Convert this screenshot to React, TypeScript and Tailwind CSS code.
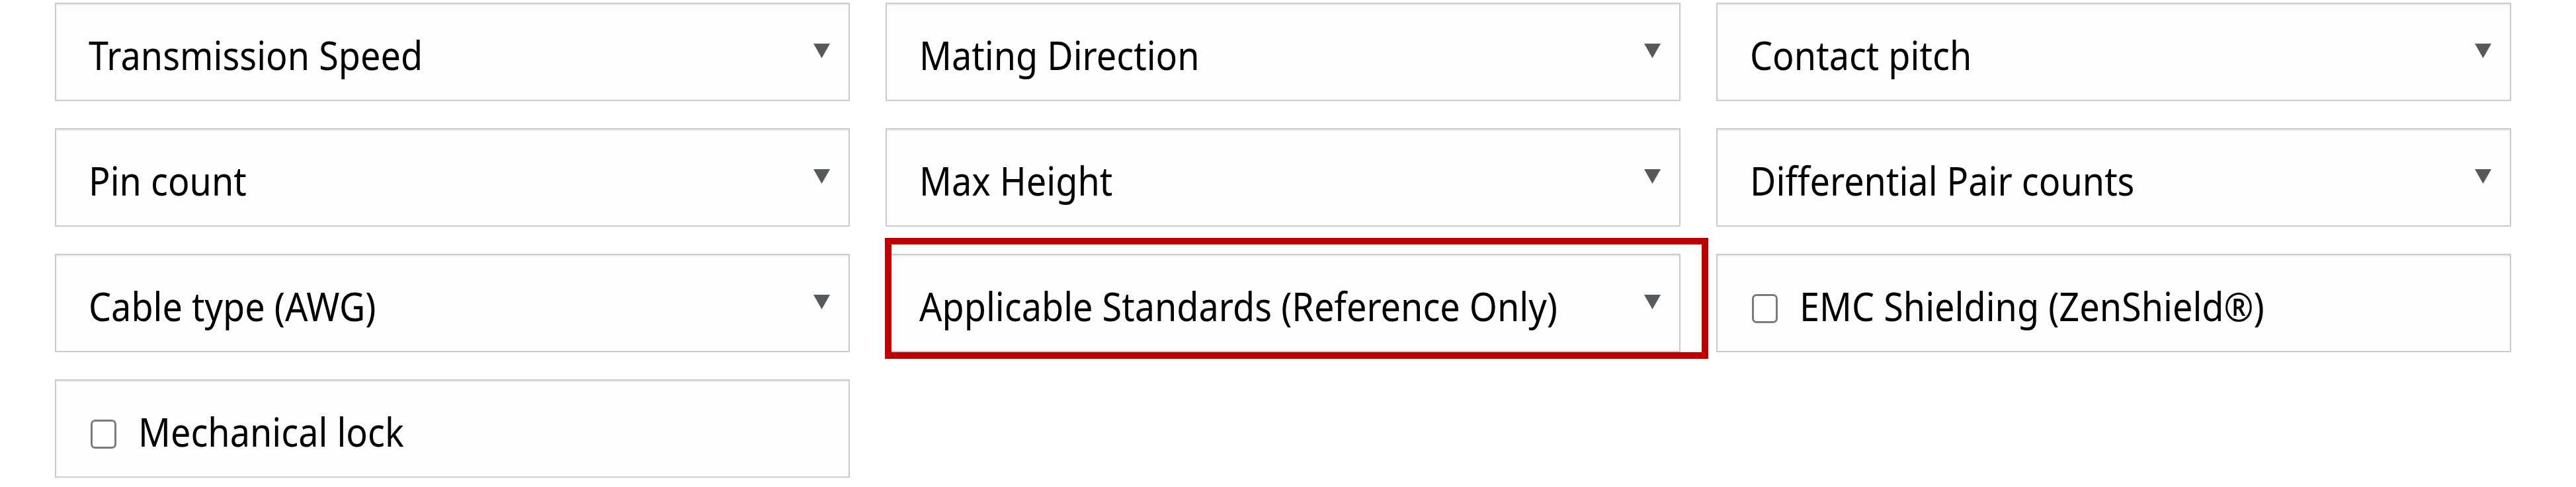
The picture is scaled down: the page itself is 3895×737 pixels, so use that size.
import React from "react"

type Field = {
  label: string
  kind: "select" | "check"
  marked?: boolean
}

const fields: Field[] = [
  { label: "Transmission Speed", kind: "select" },
  { label: "Mating Direction", kind: "select" },
  { label: "Contact pitch", kind: "select" },
  { label: "Pin count", kind: "select" },
  { label: "Max Height", kind: "select" },
  { label: "Differential Pair counts", kind: "select" },
  { label: "Cable type (AWG)", kind: "select" },
  { label: "Applicable Standards (Reference Only)", kind: "select", marked: true },
  { label: "EMC Shielding (ZenShield®)", kind: "check" },
  { label: "Mechanical lock", kind: "check" },
]

const Caret = () => (
  <svg width="25" height="22" viewBox="0 0 25 22" className="shrink-0">
    <polygon points="0,0 25,0 12.5,22" fill="#55595d" />
  </svg>
)

const Label = ({ text }: { text: string }) => (
  <span className="inline-block origin-left scale-x-[0.885] whitespace-nowrap pt-2 text-[61px] leading-none text-black">
    {text}
  </span>
)

const FieldBox = ({ field }: { field: Field }) => {
  if (field.kind === "check") {
    return (
      <label className="flex h-[149px] items-center border-2 border-[#cbcbcb] bg-[#fdfdfd] pl-[52px] shadow-[inset_0_2px_2px_rgba(0,0,0,0.07)]">
        <span className="mt-4 mr-[33px] block h-[44px] w-[39px] shrink-0 rounded-[7px] border-[3px] border-[#7b7b7b] bg-white" />
        <Label text={field.label} />
      </label>
    )
  }

  return (
    <div className="relative">
      <div className="flex h-[149px] items-center justify-between border-2 border-[#cbcbcb] bg-[#fdfdfd] pl-[49px] pr-[28px] shadow-[inset_0_2px_2px_rgba(0,0,0,0.07)]">
        <Label text={field.label} />
        <span className="mb-1">
          <Caret />
        </span>
      </div>
      {field.marked && (
        <div className="pointer-events-none absolute -left-px -top-6 h-[183px] w-[1245px] border-[10px] border-[#c00000]" />
      )}
    </div>
  )
}

export default function App() {
  return (
    <div className="min-h-[737px] w-[3895px] bg-white pl-[83px] pt-1" style={{ fontFamily: '"Noto Sans", "Open Sans", sans-serif' }}>
      <div className="grid w-[3714px] grid-cols-[1202px_1202px_1202px] gap-x-[54px] gap-y-[41px]">
        {fields.map((f) => (
          <FieldBox key={f.label} field={f} />
        ))}
      </div>
    </div>
  )
}
